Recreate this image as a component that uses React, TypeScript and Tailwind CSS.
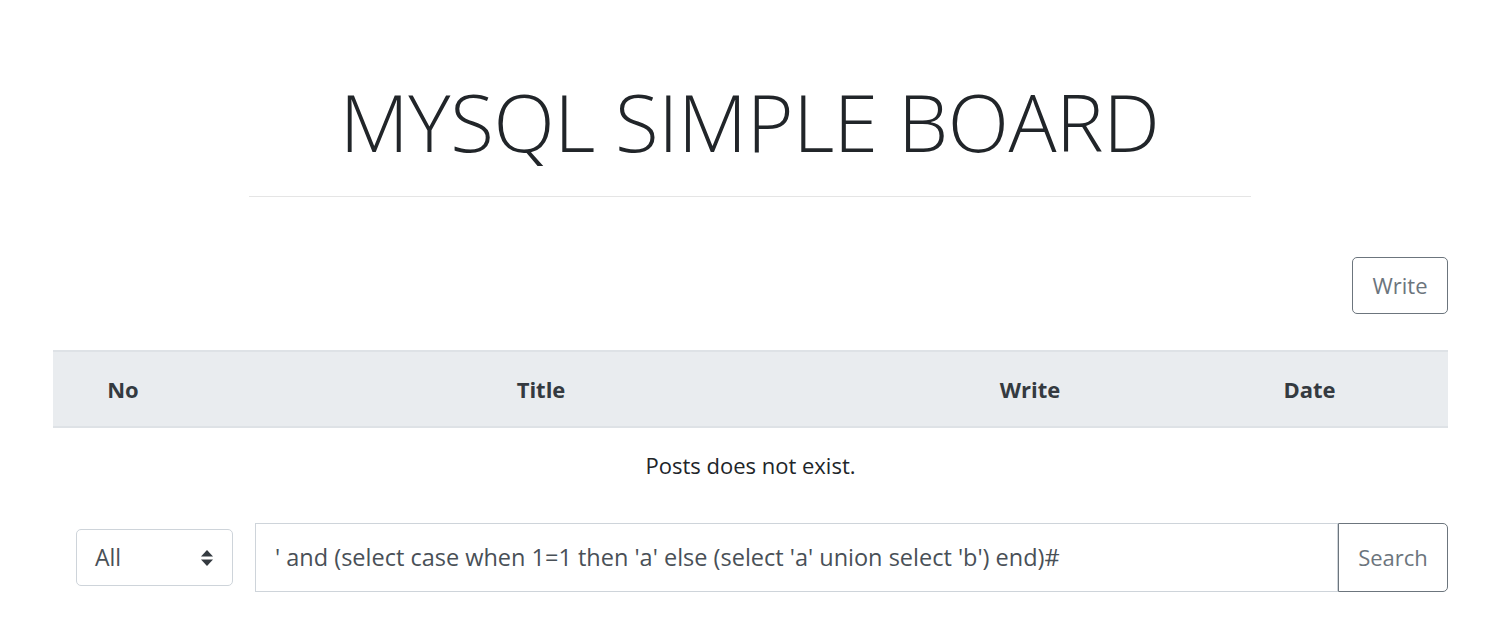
export default function App() {
  return (
    <div className="min-h-screen bg-white text-[#212529]" style={{ fontFamily: '"Open Sans", "Noto Sans", sans-serif' }}>
      <div className="mx-auto w-[1002px] pt-[73px]">
        <h1 className="text-center text-[80px] font-light leading-[1.2] tracking-[-0.4px] text-[#212529]">MYSQL SIMPLE BOARD</h1>
        <hr className="mt-[27px] border-t border-[#e5e5e5]" />
      </div>

      <div className="ml-[53px] mr-[51px] mt-[60px]">
        <div className="flex justify-end">
          <button className="h-[57px] w-[96px] rounded-[5px] border border-[#6c757d] text-[22px] text-[#6c757d]">Write</button>
        </div>

        <table className="mt-[36px] w-full border-collapse text-[22px]">
          <thead>
            <tr className="h-[76px] border-y-2 border-[#dee2e6] bg-[#e9ecef] font-bold text-[#343a40]">
              <th className="w-[140px]">No</th>
              <th className="w-[696px]">Title</th>
              <th className="w-[282px]">Write</th>
              <th>Date</th>
            </tr>
          </thead>
          <tbody>
            <tr className="h-[76px]">
              <td colSpan={4} className="text-center">Posts does not exist.</td>
            </tr>
          </tbody>
        </table>

        <div className="mt-[20px] flex items-center">
          <div className="ml-[23px] flex h-[57px] w-[157px] items-center justify-between rounded-[5px] border border-[#ced4da] pl-[18px] pr-[18px] text-[23px] text-[#495057]">
            <span>All</span>
            <svg width="14" height="18" viewBox="0 0 14 18" fill="#343a40">
              <path d="M7 1 L13 7.5 H1 Z" />
              <path d="M7 17 L13 10.5 H1 Z" />
            </svg>
          </div>
          <div className="ml-[22px] flex h-[69px] flex-1 items-center border border-[#ced4da] pl-[19px] text-[23.5px] text-[#495057]">
            ' and (select case when 1=1 then 'a' else (select 'a' union select 'b') end)#
          </div>
          <button className="h-[69px] w-[110px] rounded-r-[5px] border border-[#6c757d] text-[22px] text-[#6c757d]">Search</button>
        </div>
      </div>
    </div>
  );
}
